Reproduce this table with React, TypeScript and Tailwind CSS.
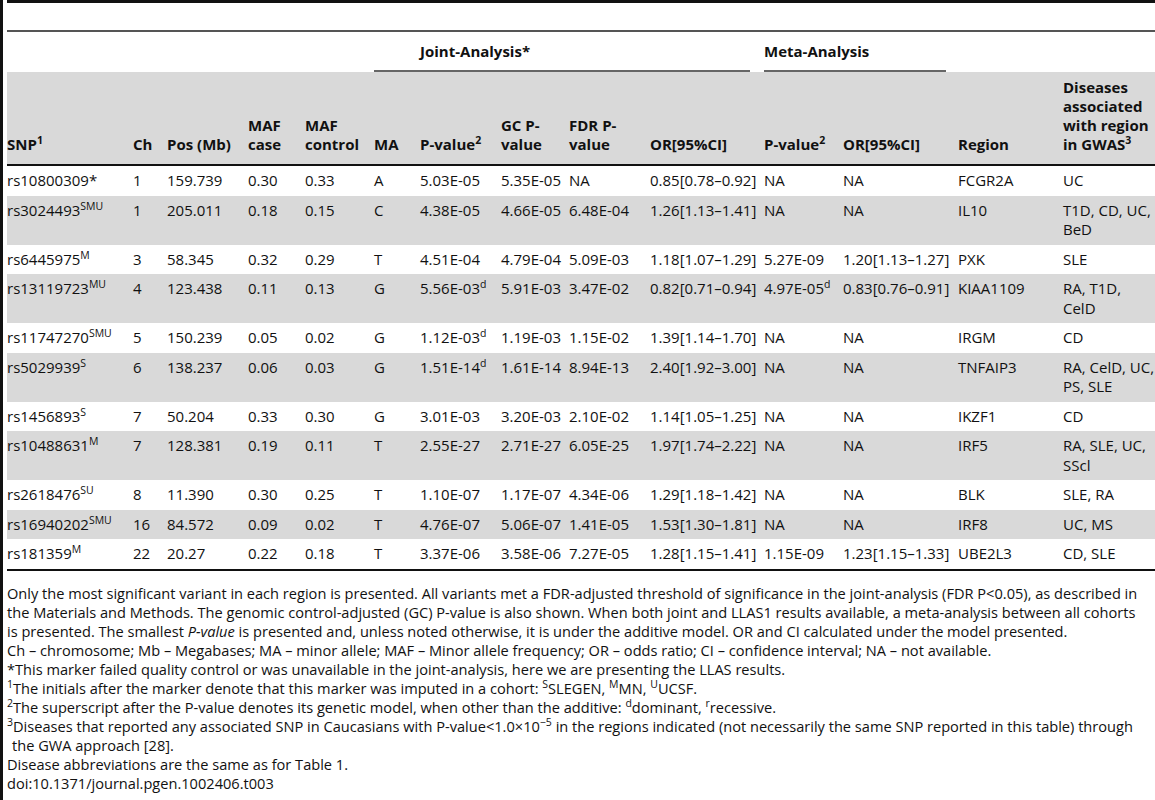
import React from "react";

const COLS =
  "grid grid-cols-[126px_34px_81px_57px_69px_46px_81px_68px_81px_114px_79px_115px_105px_92px]";

type Row = {
  snp: string;
  snpSup?: string;
  ch: string;
  pos: string;
  mafCase: string;
  mafCtrl: string;
  ma: string;
  p: string;
  pSup?: string;
  gc: string;
  fdr: string;
  or: string;
  mp: string;
  mpSup?: string;
  mor: string;
  region: string;
  dis: string[];
};

const rows: Row[] = [
  { snp: "rs10800309*", ch: "1", pos: "159.739", mafCase: "0.30", mafCtrl: "0.33", ma: "A", p: "5.03E-05", gc: "5.35E-05", fdr: "NA", or: "0.85[0.78–0.92]", mp: "NA", mor: "NA", region: "FCGR2A", dis: ["UC"] },
  { snp: "rs3024493", snpSup: "SMU", ch: "1", pos: "205.011", mafCase: "0.18", mafCtrl: "0.15", ma: "C", p: "4.38E-05", gc: "4.66E-05", fdr: "6.48E-04", or: "1.26[1.13–1.41]", mp: "NA", mor: "NA", region: "IL10", dis: ["T1D, CD, UC,", "BeD"] },
  { snp: "rs6445975", snpSup: "M", ch: "3", pos: "58.345", mafCase: "0.32", mafCtrl: "0.29", ma: "T", p: "4.51E-04", gc: "4.79E-04", fdr: "5.09E-03", or: "1.18[1.07–1.29]", mp: "5.27E-09", mor: "1.20[1.13–1.27]", region: "PXK", dis: ["SLE"] },
  { snp: "rs13119723", snpSup: "MU", ch: "4", pos: "123.438", mafCase: "0.11", mafCtrl: "0.13", ma: "G", p: "5.56E-03", pSup: "d", gc: "5.91E-03", fdr: "3.47E-02", or: "0.82[0.71–0.94]", mp: "4.97E-05", mpSup: "d", mor: "0.83[0.76–0.91]", region: "KIAA1109", dis: ["RA, T1D,", "CelD"] },
  { snp: "rs11747270", snpSup: "SMU", ch: "5", pos: "150.239", mafCase: "0.05", mafCtrl: "0.02", ma: "G", p: "1.12E-03", pSup: "d", gc: "1.19E-03", fdr: "1.15E-02", or: "1.39[1.14–1.70]", mp: "NA", mor: "NA", region: "IRGM", dis: ["CD"] },
  { snp: "rs5029939", snpSup: "S", ch: "6", pos: "138.237", mafCase: "0.06", mafCtrl: "0.03", ma: "G", p: "1.51E-14", pSup: "d", gc: "1.61E-14", fdr: "8.94E-13", or: "2.40[1.92–3.00]", mp: "NA", mor: "NA", region: "TNFAIP3", dis: ["RA, CelD, UC,", "PS, SLE"] },
  { snp: "rs1456893", snpSup: "S", ch: "7", pos: "50.204", mafCase: "0.33", mafCtrl: "0.30", ma: "G", p: "3.01E-03", gc: "3.20E-03", fdr: "2.10E-02", or: "1.14[1.05–1.25]", mp: "NA", mor: "NA", region: "IKZF1", dis: ["CD"] },
  { snp: "rs10488631", snpSup: "M", ch: "7", pos: "128.381", mafCase: "0.19", mafCtrl: "0.11", ma: "T", p: "2.55E-27", gc: "2.71E-27", fdr: "6.05E-25", or: "1.97[1.74–2.22]", mp: "NA", mor: "NA", region: "IRF5", dis: ["RA, SLE, UC,", "SScl"] },
  { snp: "rs2618476", snpSup: "SU", ch: "8", pos: "11.390", mafCase: "0.30", mafCtrl: "0.25", ma: "T", p: "1.10E-07", gc: "1.17E-07", fdr: "4.34E-06", or: "1.29[1.18–1.42]", mp: "NA", mor: "NA", region: "BLK", dis: ["SLE, RA"] },
  { snp: "rs16940202", snpSup: "SMU", ch: "16", pos: "84.572", mafCase: "0.09", mafCtrl: "0.02", ma: "T", p: "4.76E-07", gc: "5.06E-07", fdr: "1.41E-05", or: "1.53[1.30–1.81]", mp: "NA", mor: "NA", region: "IRF8", dis: ["UC, MS"] },
  { snp: "rs181359", snpSup: "M", ch: "22", pos: "20.27", mafCase: "0.22", mafCtrl: "0.18", ma: "T", p: "3.37E-06", gc: "3.58E-06", fdr: "7.27E-05", or: "1.28[1.15–1.41]", mp: "1.15E-09", mor: "1.23[1.15–1.33]", region: "UBE2L3", dis: ["CD, SLE"] },
];

function Sup({ children }: { children: React.ReactNode }) {
  return (
    <span className="relative -top-[6px] align-baseline text-[10.5px] leading-none">{children}</span>
  );
}

export default function App() {
  return (
    <div
      className="min-h-[800px] w-[1155px] overflow-hidden border-l-[3px] border-[#111] bg-white pl-[4px] text-[#111]"
      style={{ fontFamily: '"Open Sans", "Noto Sans", sans-serif' }}
    >
      {/* top rule and empty caption row */}
      <div className="h-[30px] border-t-[3px] border-[#111]" />
      <div className="h-[2px] bg-[#555]" />

      {/* group header */}
      <div className={`${COLS} h-[40px] text-[15px] font-bold`}>
        <div className="col-span-5" />
        <div className="col-span-5 flex flex-col justify-end pr-[14px]">
          <div className="flex flex-1 items-center pl-[46px] leading-[19px]">Joint-Analysis*</div>
          <div className="h-[2px] bg-[#666]" />
        </div>
        <div className="col-span-2 flex flex-col justify-end pr-[12px]">
          <div className="flex flex-1 items-center leading-[19px]">Meta-Analysis</div>
          <div className="h-[2px] bg-[#666]" />
        </div>
        <div className="col-span-2" />
      </div>

      {/* column header */}
      <div className={`${COLS} items-end whitespace-nowrap border-b-[2px] border-[#111] bg-[#d9d9d9] pb-[10px] pt-[6px] text-[15px] font-bold leading-[19px]`}>
        <div>
          SNP<Sup>1</Sup>
        </div>
        <div>Ch</div>
        <div>Pos (Mb)</div>
        <div>
          MAF
          <br />
          case
        </div>
        <div>
          MAF
          <br />
          control
        </div>
        <div>MA</div>
        <div>
          P-value<Sup>2</Sup>
        </div>
        <div>
          GC P-
          <br />
          value
        </div>
        <div>
          FDR P-
          <br />
          value
        </div>
        <div>OR[95%CI]</div>
        <div>
          P-value<Sup>2</Sup>
        </div>
        <div>OR[95%CI]</div>
        <div>Region</div>
        <div>
          Diseases
          <br />
          associated
          <br />
          with region
          <br />
          in GWAS<Sup>3</Sup>
        </div>
      </div>

      {/* body */}
      <div className="border-b-[2px] border-[#111]">
        {rows.map((r, i) => (
          <div
            key={r.snp}
            className={`${COLS} py-[5px] text-[15px] leading-[19.5px] ${i % 2 === 1 ? "bg-[#d9d9d9]" : "bg-white"}`}
          >
            <div className="whitespace-nowrap">
              {r.snp}
              {r.snpSup && <Sup>{r.snpSup}</Sup>}
            </div>
            <div>{r.ch}</div>
            <div>{r.pos}</div>
            <div>{r.mafCase}</div>
            <div>{r.mafCtrl}</div>
            <div>{r.ma}</div>
            <div className="whitespace-nowrap">
              {r.p}
              {r.pSup && <Sup>{r.pSup}</Sup>}
            </div>
            <div>{r.gc}</div>
            <div>{r.fdr}</div>
            <div className="whitespace-nowrap">{r.or}</div>
            <div className="whitespace-nowrap">
              {r.mp}
              {r.mpSup && <Sup>{r.mpSup}</Sup>}
            </div>
            <div className="whitespace-nowrap">{r.mor}</div>
            <div>{r.region}</div>
            <div className="whitespace-nowrap">
              {r.dis.map((d) => (
                <div key={d}>{d}</div>
              ))}
            </div>
          </div>
        ))}
      </div>

      {/* footnotes */}
      <div className="whitespace-nowrap pt-[13px] text-[14.6px] leading-[19px]">
        <div>
          Only the most significant variant in each region is presented. All variants met a FDR-adjusted threshold of significance in the joint-analysis (FDR P&lt;0.05), as described in
        </div>
        <div>
          the Materials and Methods. The genomic control-adjusted (GC) P-value is also shown. When both joint and LLAS1 results available, a meta-analysis between all cohorts
        </div>
        <div>
          is presented. The smallest <i>P-value</i> is presented and, unless noted otherwise, it is under the additive model. OR and CI calculated under the model presented.
        </div>
        <div>Ch – chromosome; Mb – Megabases; MA – minor allele; MAF – Minor allele frequency; OR – odds ratio; CI – confidence interval; NA – not available.</div>
        <div>*This marker failed quality control or was unavailable in the joint-analysis, here we are presenting the LLAS results.</div>
        <div>
          <Sup>1</Sup>The initials after the marker denote that this marker was imputed in a cohort: <Sup>S</Sup>SLEGEN, <Sup>M</Sup>MN, <Sup>U</Sup>UCSF.
        </div>
        <div>
          <Sup>2</Sup>The superscript after the P-value denotes its genetic model, when other than the additive: <Sup>d</Sup>dominant, <Sup>r</Sup>recessive.
        </div>
        <div>
          <Sup>3</Sup>Diseases that reported any associated SNP in Caucasians with P-value&lt;1.0×10<Sup>−5</Sup> in the regions indicated (not necessarily the same SNP reported in this table) through
        </div>
        <div className="pl-[5px]">the GWA approach [28].</div>
        <div>Disease abbreviations are the same as for Table 1.</div>
        <div>doi:10.1371/journal.pgen.1002406.t003</div>
      </div>
    </div>
  );
}
